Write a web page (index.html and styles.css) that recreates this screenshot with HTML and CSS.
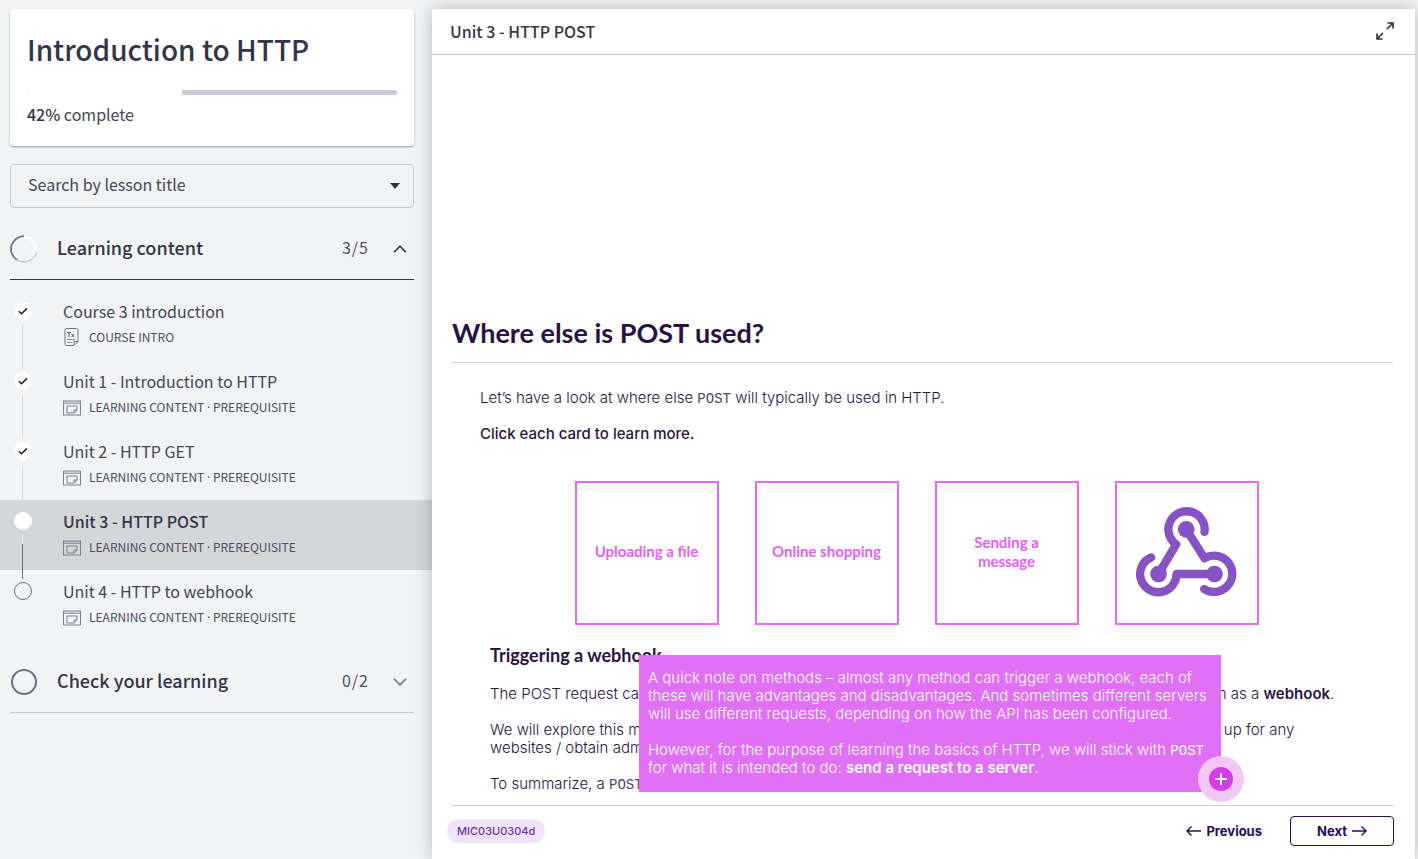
FILE: index.html
```html
<!DOCTYPE html>
<html lang="en">
<head>
<meta charset="utf-8">
<meta name="viewport" content="width=device-width, initial-scale=1">
<title>Introduction to HTTP</title>
<link rel="stylesheet" href="styles.css">
</head>
<body>
<svg class="defs" width="0" height="0" aria-hidden="true">
  <symbol id="icon-window" viewBox="0 0 18 15">
    <rect x=".5" y=".5" width="17" height="14" fill="none" stroke="currentColor"/>
    <path d="M1 1h16v2H1z" fill="currentColor" opacity=".35"/>
    <path d="M1 3h16" stroke="currentColor" fill="none" opacity=".6"/>
    <path d="M4 5.500h10v4L11.500 12.500H4zM11 12v-2.500h3" stroke="currentColor" fill="none"/>
  </symbol>
  <symbol id="icon-check" viewBox="0 0 18 18">
    <path d="M4.800 9.200l2.700 2.600 5.500-5.400" fill="none" stroke="#20222e" stroke-width="1.500"/>
  </symbol>
</svg>
<div class="page">
  <aside class="sidebar">
    <section class="course">
      <h1 class="course-title">Introduction to HTTP</h1>
      <progress class="course-bar" max="100" value="42" aria-label="Course progress"></progress>
      <p class="course-status"><strong>42%</strong> complete</p>
    </section>

    <div class="search">
      <select class="search-field" aria-label="Search by lesson title">
        <option>Search by lesson title</option>
      </select>
      <svg class="search-caret" viewBox="0 0 10 6" aria-hidden="true"><path d="M0 0h10L5 6z" fill="#2f3147"/></svg>
    </div>

    <section class="chapter">
      <button class="chapter-head chapter-open" type="button" aria-expanded="true">
        <svg class="ring" viewBox="0 0 28 28" aria-hidden="true">
          <circle cx="14" cy="14" r="12" fill="none" stroke="#fff" stroke-width="2.500"/>
          <path d="M14 1.200A12.800 12.800 0 0 0 7 24.800" fill="none" stroke="#6d7085" stroke-width="1.800"/>
          <path d="M7 24.800A13 13 0 0 0 26.500 17.500" fill="none" stroke="#a4a6b4" stroke-width="1"/>
        </svg>
        <span class="chapter-name">Learning content</span>
        <span class="chapter-count">3/5</span>
        <svg class="chevron" viewBox="0 0 14 8" aria-hidden="true"><path d="M1 7.200l6-6 6 6" fill="none" stroke="#33354a" stroke-width="1.600"/></svg>
      </button>
      <ul class="lessons">
        <li><a class="lesson" href="#intro">
          <span class="track"><span class="dot"><svg viewBox="0 0 18 18"><use href="#icon-check"/></svg></span><span class="line"></span></span>
          <span class="lesson-text">
            <span class="lesson-title">Course 3 introduction</span>
            <span class="lesson-meta">
              <svg class="meta-icon" viewBox="0 0 18 18" aria-hidden="true">
                <path d="M3.500 .5h10q1.500 0 1.500 1.500v11.500l-4 4H3.500Q2 17.500 2 16V2Q2 .5 3.500 .5zM11 17v-3.500h4" fill="none" stroke="#6b7590" stroke-width="1"/>
                <path d="M4 4.500h4M6 4.500v4.500M8.500 6l2.500 3M11 6L8.500 9" stroke="#6a5361" fill="none"/>
                <path d="M4 11.500h8M4 14.500h5" stroke="#8d90a3" fill="none"/>
              </svg>
              COURSE INTRO</span>
          </span></a></li>
        <li><a class="lesson" href="#unit-1">
          <span class="track"><span class="dot"><svg viewBox="0 0 18 18"><use href="#icon-check"/></svg></span><span class="line"></span></span>
          <span class="lesson-text">
            <span class="lesson-title">Unit 1 - Introduction to HTTP</span>
            <span class="lesson-meta"><svg class="meta-icon" aria-hidden="true"><use href="#icon-window"/></svg><span>LEARNING CONTENT <span class="sep">·</span> PREREQUISITE</span></span>
          </span></a></li>
        <li><a class="lesson" href="#unit-2">
          <span class="track"><span class="dot"><svg viewBox="0 0 18 18"><use href="#icon-check"/></svg></span><span class="line"></span></span>
          <span class="lesson-text">
            <span class="lesson-title">Unit 2 - HTTP GET</span>
            <span class="lesson-meta"><svg class="meta-icon" aria-hidden="true"><use href="#icon-window"/></svg><span>LEARNING CONTENT <span class="sep">·</span> PREREQUISITE</span></span>
          </span></a></li>
        <li><a class="lesson lesson-current" href="#unit-3" aria-current="page">
          <span class="track"><span class="dot"></span><span class="line line-next"></span></span>
          <span class="lesson-text">
            <span class="lesson-title">Unit 3 - HTTP POST</span>
            <span class="lesson-meta"><svg class="meta-icon" aria-hidden="true"><use href="#icon-window"/></svg><span>LEARNING CONTENT <span class="sep">·</span> PREREQUISITE</span></span>
          </span></a></li>
        <li><a class="lesson" href="#unit-4">
          <span class="track"><span class="dot dot-empty"></span></span>
          <span class="lesson-text">
            <span class="lesson-title">Unit 4 - HTTP to webhook</span>
            <span class="lesson-meta"><svg class="meta-icon" aria-hidden="true"><use href="#icon-window"/></svg><span>LEARNING CONTENT <span class="sep">·</span> PREREQUISITE</span></span>
          </span></a></li>
      </ul>
    </section>

    <section class="chapter">
      <button class="chapter-head" type="button" aria-expanded="false">
        <svg class="ring" viewBox="0 0 28 28" aria-hidden="true"><circle cx="14" cy="14" r="12" fill="none" stroke="#6d7085" stroke-width="2"/></svg>
        <span class="chapter-name">Check your learning</span>
        <span class="chapter-count">0/2</span>
        <svg class="chevron" viewBox="0 0 14 8" aria-hidden="true"><path d="M1 .8l6 6 6-6" fill="none" stroke="#6d7085" stroke-width="1.600"/></svg>
      </button>
    </section>
  </aside>

  <main class="panel">
    <header class="panel-head">
      <h2 class="panel-title">Unit 3 - HTTP POST</h2>
      <button class="expand" type="button" aria-label="Full screen">
        <svg viewBox="0 0 18 18" width="18" height="18" aria-hidden="true"><path d="M11 7l5.800-5.800M11.500 1H17v5.500M7 11l-5.800 5.800M1 11.500V17h5.500" fill="none" stroke="#2a2c40" stroke-width="1.600"/></svg>
      </button>
    </header>

    <article class="slide">
      <h2 class="slide-title">Where else is POST used?</h2>
      <div class="slide-body">
        <div class="lead">
          <p>Let’s have a look at where else <code>POST</code> will typically be used in HTTP.</p>
          <p class="prompt">Click each card to learn more.</p>
        </div>
        <div class="cards">
          <button class="card" type="button">Uploading a file</button>
          <button class="card" type="button">Online shopping</button>
          <button class="card" type="button">Sending a message</button>
          <button class="card" type="button" aria-label="Webhook">
            <svg width="101" height="90" viewBox="648 108 302 270" aria-hidden="true">
              <g fill="none" stroke="#8653c4" stroke-width="25" stroke-linejoin="round">
                <path stroke-linecap="round" d="M853 183A54.500 54.500 0 1 0 768 220L715 309"/>
                <path stroke-linecap="round" d="M798 175L853 262A54.500 54.500 0 1 1 852 354"/>
                <path stroke-linecap="round" d="M883 309H769A54.500 54.500 0 1 1 693 259"/>
              </g>
              <g fill="#8653c4"><circle cx="798" cy="175" r="25"/><circle cx="715" cy="309" r="25"/><circle cx="883" cy="309" r="25"/></g>
            </svg>
          </button>
        </div>
        <div class="explain">
          <h3 class="explain-title">Triggering a webhook</h3>
          <p>The POST request can also be used to trigger an event on another web server, which is something known as a <b>webhook</b>.</p>
          <p>We will explore this more in the next unit, and for that you will not need any new accounts or have to sign up for any<br>websites / obtain admin access.</p>
          <p>To summarize, a <code>POST</code> request sends data to a server.</p>
          <aside class="note">
            <p>A quick note on methods – almost any method can trigger a webhook, each of these will have advantages and disadvantages. And sometimes different servers will use different requests, depending on how the API has been configured.</p>
            <p>However, for the purpose of learning the basics of HTTP, we will stick with <code>POST</code> for what it is intended to do: <b>send a request to a server</b>.</p>
            <button class="note-toggle" type="button" aria-label="More">
              <svg viewBox="0 0 24 24" width="24" height="24" aria-hidden="true"><circle cx="12" cy="12" r="12" fill="#d63be8"/><path d="M12 6v12M6 12h12" stroke="#fff" stroke-width="2" fill="none"/></svg>
            </button>
          </aside>
        </div>
      </div>
      <footer class="slide-foot">
        <span class="tag">MIC03U0304d</span>
        <nav class="pager">
          <button class="nav-btn" type="button">
            <svg viewBox="0 0 15 10" width="15" height="10" aria-hidden="true"><path d="M15 5H1M5.500 .6L1 5l4.500 4.400" fill="none" stroke="currentColor" stroke-width="1.400"/></svg>
            Previous</button>
          <button class="nav-btn nav-next" type="button">Next
            <svg viewBox="0 0 15 10" width="15" height="10" aria-hidden="true"><path d="M0 5h14M9.500 .6L14 5l-4.500 4.400" fill="none" stroke="currentColor" stroke-width="1.400"/></svg>
          </button>
        </nav>
      </footer>
    </article>
  </main>
</div>
</body>
</html>
```
FILE: styles.css
```css
* { box-sizing: border-box; }

body {
  margin: 0;
  background: #f1f3f5;
  color: #33354a;
  font-family: "Noto Sans CJK SC", "Noto Sans", sans-serif;
}

h1, h2, h3, p, ul { margin: 0; padding: 0; }
ul { list-style: none; }
button, select { font: inherit; color: inherit; background: none; border: 0; padding: 0; }
button { cursor: pointer; }
a { color: inherit; text-decoration: none; }
.defs { position: absolute; }

.page { display: flex; min-height: 100vh; }

/* Sidebar */
.sidebar { flex: 0 0 432px; padding-top: 9px; }

.course {
  margin: 0 18px 18px 10px;
  padding: 18px 17px 19px;
  background: #fff;
  border-radius: 4px;
  box-shadow: 0 1px 2px rgba(60, 75, 75, .5);
}
.course-title { font-size: 28px; line-height: 44px; font-weight: 500; }
.course-bar {
  display: block;
  width: 100%;
  height: 5px;
  margin: 19px 0 6px;
  appearance: none;
  border: 0;
  border-radius: 3px;
  overflow: hidden;
}
.course-bar::-webkit-progress-bar { background: #c9cad6; }
.course-bar::-webkit-progress-value { background: #fff; }
.course-status { font-size: 16px; line-height: 26px; color: #44465a; }
.course-status strong { font-weight: 500; color: #33354a; }

.search { display: grid; align-items: center; margin: 0 18px 0 10px; }
.search-field, .search-caret { grid-area: 1 / 1; }
.search-field {
  appearance: none;
  height: 44px;
  padding: 0 17px 4px;
  border: 1px solid #c9cad6;
  border-radius: 4px;
  color: #44465a;
  font-size: 16px;
}
.search-caret { width: 10px; height: 6px; margin-right: 14px; justify-self: end; pointer-events: none; }

.chapter-head {
  display: flex;
  align-items: center;
  width: calc(100% - 28px);
  height: 62px;
  margin: 0 18px 0 10px;
  border-bottom: 1px solid #c9cad6;
  text-align: left;
}
.chapter-open { height: 72px; padding-top: 10px; border-bottom-color: #33354a; }
.ring { width: 28px; height: 28px; margin-right: 19px; }
.chapter-name, .chapter-count { padding-bottom: 3px; }
.chapter-name { flex: 1; font-size: 18px; font-weight: 500; }
.chapter-count { font-size: 16px; letter-spacing: 1px; color: #4c4e63; }
.chevron { width: 14px; height: 8px; margin: 0 7px 0 24px; }

.lessons { padding: 10px 0 11px; }
.lesson { display: flex; min-height: 70px; }
.lesson-current { background: #d5d6da; }
.track {
  display: flex;
  flex-direction: column;
  align-items: center;
  gap: 5px;
  width: 45px;
  margin-right: 18px;
  padding-top: 12px;
}
.dot { width: 18px; height: 18px; border-radius: 50%; background: #fff; }
.dot svg { display: block; width: 18px; height: 18px; }
.dot-empty { border: 1px solid #6d7085; background: none; }
.line { position: relative; z-index: 1; width: 1px; height: 44px; margin-bottom: -9px; background: #d9dade; }
.line-next { background: linear-gradient(#f1f3f5 9px, #6d7085 9px); }
.lesson-text { display: block; padding-top: 8px; }
.lesson-title { display: block; font-size: 16px; line-height: 26px; color: #44465a; }
.lesson-current .lesson-title { font-weight: 500; color: #33354a; }
.lesson-meta { display: flex; align-items: center; gap: 8px; font-size: 12px; line-height: 26px; color: #4c4e63; }
.sep { font-family: "Noto Sans", sans-serif; }
.meta-icon { width: 18px; height: 18px; color: #7d8095; }

/* Lesson panel */
.panel {
  display: flex;
  flex: 1;
  flex-direction: column;
  min-width: 0;
  margin: 9px 3px 0 0;
  background: #fff;
  box-shadow: 0 0 16px rgba(0, 0, 0, .25);
}
.panel-head {
  display: flex;
  align-items: center;
  justify-content: space-between;
  height: 46px;
  padding: 0 21px 2px 18px;
  border-bottom: 1px solid #c9cad6;
}
.panel-title { font-size: 16px; line-height: 26px; font-weight: 500; }
.expand svg { display: block; }

.slide {
  display: flex;
  flex: 1;
  flex-direction: column;
  justify-content: flex-end;
  padding: 0 22px 0 20px;
  color: #2b1244;
  font-family: Inter, "Open Sans", sans-serif;
  font-size: 15px;
  line-height: 18px;
  font-weight: 300;
}
.slide code { font-family: "Liberation Mono", monospace; font-size: 14px; line-height: 1; color: #54406a; }
.slide b { font-weight: 600; }
.slide-title {
  padding-bottom: 12px;
  border-bottom: 1px solid #d3cdd6;
  font-family: Lato, sans-serif;
  font-size: 27px;
  line-height: 34px;
  font-weight: 700;
}
.slide-body { padding: 26px 40px 12px 28px; }
.lead { display: grid; gap: 18px; }
.prompt { font-weight: 500; }
.cards { display: flex; justify-content: center; gap: 36px; margin: 38px 0 20px; }
.card {
  display: flex;
  align-items: center;
  justify-content: center;
  width: 144px;
  height: 144px;
  padding: 0 28px 3px;
  border: 2px solid #e66af5;
  color: #e35ff5;
  font-family: Lato, sans-serif;
  font-size: 15px;
  line-height: 19px;
  font-weight: 700;
}
.card:nth-child(-n + 2) { padding: 0 0 3px; }
.card svg { flex: none; }
.explain { position: relative; display: grid; gap: 18px; margin: 0 -30px 0 10px; }
.explain-title { padding-bottom: 2px; font-family: Lato, sans-serif; font-size: 18px; line-height: 20px; font-weight: 700; }
.note {
  position: absolute;
  top: 10px;
  left: 149px;
  display: grid;
  gap: 18px;
  width: 582px;
  padding: 14px 4px 15px 9px;
  background: #e070f5;
  color: #fff;
  font-weight: 350;
}
.slide .note code { color: #fff; }
.note-toggle {
  position: absolute;
  right: -23px;
  bottom: -10px;
  display: grid;
  place-items: center;
  width: 46px;
  height: 46px;
  border-radius: 50%;
  background: #f1c8f5;
}

.slide-foot {
  display: flex;
  align-items: center;
  justify-content: space-between;
  height: 54px;
  margin-right: -1px;
  padding-bottom: 4px;
  border-top: 1px solid #cfcccf;
}
.tag {
  margin-left: -5px;
  padding: 3px 10px;
  border-radius: 12px;
  background: #f0e4fb;
  color: #7434a8;
  font-size: 11px;
  font-weight: 500;
}
.pager { display: flex; align-items: center; gap: 28px; }
.nav-btn {
  display: flex;
  align-items: center;
  justify-content: center;
  gap: 5px;
  color: #2b0a5c;
  font-size: 13px;
  font-weight: 700;
}
.nav-next { width: 104px; height: 30px; border: 1px solid #2b0a5c; border-radius: 4px; }
```
